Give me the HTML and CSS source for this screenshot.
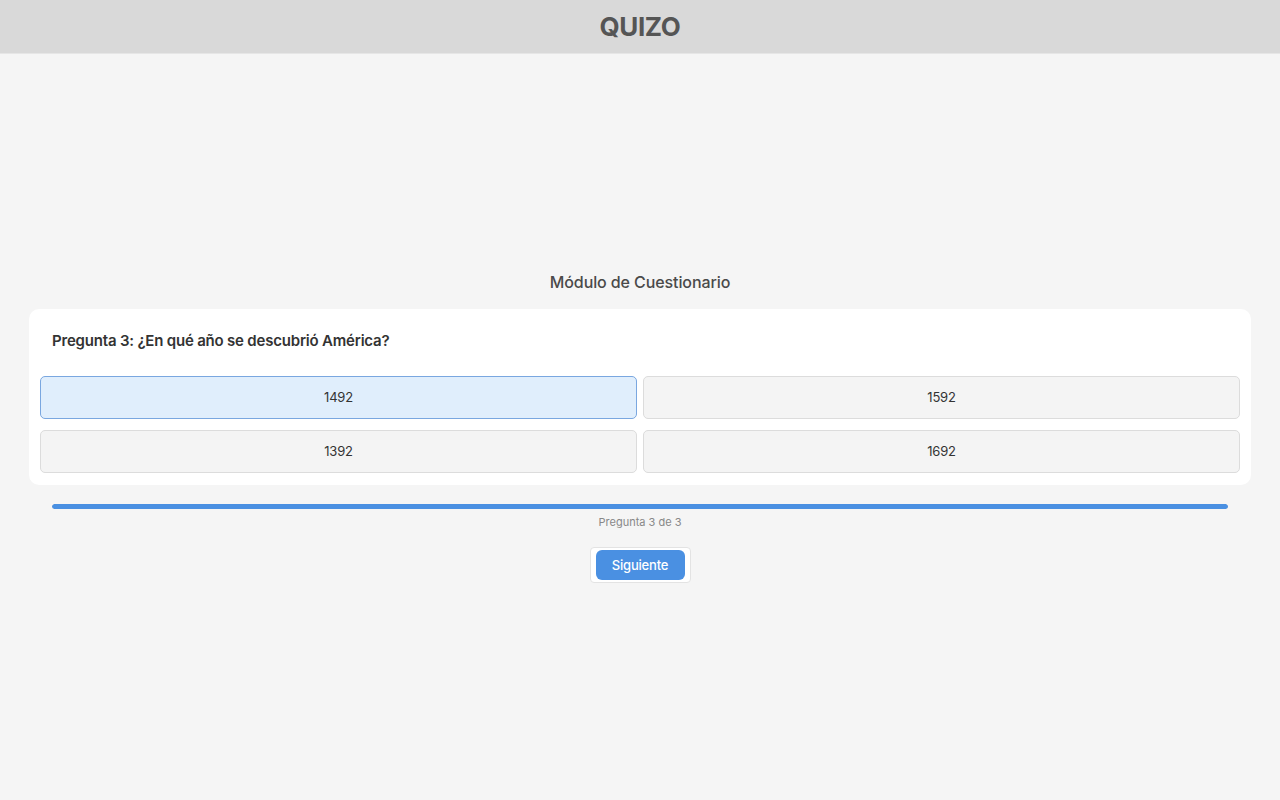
FILE: index.html
```html
<!DOCTYPE html>
<html lang="es">
<head>
<meta charset="utf-8">
<title>QUIZO</title>
<link rel="stylesheet" href="styles.css">
</head>
<body>
<header class="topbar"><h1 class="brand">QUIZO</h1></header>
<main class="main">
  <div class="module">
    <h2 class="module-title">Módulo de Cuestionario</h2>
    <section class="card">
      <p class="question">Pregunta 3: ¿En qué año se descubrió América?</p>
      <div class="options">
        <button class="option selected">1492</button>
        <button class="option">1592</button>
        <button class="option">1392</button>
        <button class="option">1692</button>
      </div>
    </section>
    <div class="progress"><div class="progress-fill" style="width:100%"></div></div>
    <p class="progress-label">Pregunta 3 de 3</p>
    <div class="actions"><button class="next">Siguiente</button></div>
  </div>
</main>
</body>
</html>
```
FILE: styles.css
```css
* { box-sizing: border-box; }
html, body { margin: 0; padding: 0; }
body {
  background: #f5f5f5;
  font-family: Inter, "Noto Sans", "Liberation Sans", sans-serif;
  color: #333;
  min-height: 800px;
  display: flex;
  flex-direction: column;
}
.topbar {
  height: 54px;
  background: #d9d9d9;
  border-bottom: 1px solid #e6e6e6;
  display: flex;
  align-items: center;
  justify-content: center;
}
.brand {
  margin: 0;
  font-size: 26px;
  font-weight: 700;
  color: #555;
  letter-spacing: -0.4px;
}
.main {
  flex: 1;
  display: flex;
  align-items: center;
  justify-content: center;
  padding: 0 29px;
}
.module {
  width: 100%;
  display: flex;
  flex-direction: column;
  align-items: center;
  padding: 4px 0 6px;
}
.module-title {
  margin: 0 0 15px;
  font-size: 16px;
  font-weight: 500;
  color: #4a4a4a;
  line-height: 24px;
  letter-spacing: -0.1px;
}
.card {
  width: 100%;
  background: #fff;
  border-radius: 10px;
  padding: 21px 11px 12px;
}
.question {
  margin: 0 0 24px 12px;
  font-size: 15px;
  font-weight: 600;
  color: #333;
  line-height: 22px;
  letter-spacing: -0.2px;
}
.options {
  display: grid;
  grid-template-columns: 1fr 1fr;
  column-gap: 6px;
  row-gap: 11px;
}
.option {
  height: 43px;
  font-family: inherit;
  font-size: 13px;
  color: #333;
  background: #f4f4f4;
  border: 1px solid #dcdcdc;
  border-radius: 5px;
  letter-spacing: -0.2px;
}
.option.selected {
  background: #e0eefc;
  border-color: #7aa7e0;
}
.progress {
  width: calc(100% - 46px);
  height: 5px;
  margin-top: 19px;
  background: #e0e0e0;
  border-radius: 3px;
  overflow: hidden;
}
.progress-fill {
  height: 100%;
  background: #4a90e2;
  border-radius: 3px;
}
.progress-label {
  margin: 6px 0 0;
  font-size: 11px;
  color: #888;
  line-height: 15px;
}
.actions {
  margin-top: 17px;
  padding: 2px 5px;
  border: 1px solid #e3e3e3;
  border-radius: 4px;
  background: #fff;
}
.next {
  display: block;
  width: 89px;
  height: 30px;
  font-family: inherit;
  font-size: 13px;
  font-weight: 500;
  color: #fff;
  background: #4a90e2;
  border: none;
  border-radius: 6px;
  letter-spacing: -0.2px;
}
```
